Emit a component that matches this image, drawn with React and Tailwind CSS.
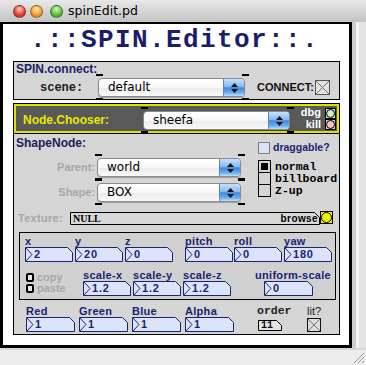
import React from "react";

const SANS = "[font-family:'Liberation_Sans',Arial,sans-serif]";
const MONO = "[font-family:'Liberation_Mono',monospace]";
const DEJA = "[font-family:'DejaVu_Sans',sans-serif]";
const SERIF = "[font-family:'Liberation_Serif',serif]";

// aqua style popup menu, with the little pd inlet/outlet ticks
const Popup = ({ w, text }) => (
    <div className={`relative ${w} h-[19px] shrink-0`}>
        <span className="absolute left-[-2px] top-[-4px] w-[7px] h-[2px] bg-black" />
        <span className="absolute right-[-4px] top-[-4px] w-[7px] h-[2px] bg-black" />
        <span className="absolute left-[-2px] bottom-[-3px] w-[7px] h-[2px] bg-black" />
        <span className="absolute right-[-4px] bottom-[-3px] w-[7px] h-[2px] bg-black" />
        <div className="h-full flex rounded-[4px] border border-[#8a8a8a] bg-[linear-gradient(#ffffff,#f7f7f7_50%,#ebebeb_52%,#f9f9f9)] shadow-[0_1px_1px_rgba(0,0,0,0.25)] overflow-hidden">
            <span className={`flex-1 pl-[9px] text-[12px] leading-[17px] text-black ${DEJA}`}>{text}</span>
            <span className="w-[21px] flex flex-col items-center justify-center gap-[2px] border-l border-[#5f86c0] bg-[linear-gradient(#c6e1fb,#86baf0_45%,#4187dd_52%,#68acef_80%,#b9e2ff)]">
                <svg width="7" height="4"><polygon points="3.5,0 7,4 0,4" fill="#111" /></svg>
                <svg width="7" height="4"><polygon points="0,0 7,0 3.5,4" fill="#111" /></svg>
            </span>
        </div>
    </div>
);

// pd atom box: notched top-right corner, optional ">" for number boxes
const Atom = ({ w, h = 15, v, fill = "#dbe4fb", stroke = "#1b2470", arrow = true, textCls }) => (
    <div className="relative shrink-0">
        <svg width={w} height={h} className="block">
            <polygon
                points={`0.5,0.5 ${w - 5.5},0.5 ${w - 0.5},5.5 ${w - 0.5},${h - 0.5} 0.5,${h - 0.5}`}
                fill={fill}
                stroke={stroke}
            />
            {arrow && <polyline points={`1,1 7,${h / 2} 1,${h - 1}`} fill="none" stroke={stroke} />}
        </svg>
        {v !== undefined && (
            <span className={`absolute top-0 ${arrow ? "left-[9px]" : "left-[3px]"} ${textCls}`}>{v}</span>
        )}
    </div>
);

const Num = ({ label, v, w = 48 }) => (
    <div className="flex flex-col">
        <span className={`text-[11px] leading-[12px] font-bold tracking-[0.3px] text-[#1b2470] ${SANS}`}>{label}</span>
        <Atom w={w} v={v} textCls={`text-[11px] leading-[15px] font-bold tracking-[0.8px] text-[#1b2470] ${SANS}`} />
    </div>
);

const Toggle = ({ s = 15, fill = "#e2e2e2", stroke = "#555" }) => (
    <svg width={s} height={s} className="block shrink-0">
        <rect x="0.5" y="0.5" width={s - 1} height={s - 1} fill={fill} stroke={stroke} />
        <line x1="1" y1="1" x2={s - 1} y2={s - 1} stroke="#777" />
        <line x1={s - 1} y1="1" x2="1" y2={s - 1} stroke="#777" />
    </svg>
);

const Bang = ({ cls }) => (
    <div className={`w-[11px] h-[11px] border border-black ${cls} flex items-center justify-center`}>
        <div className="w-[9px] h-[9px] rounded-full border border-black" />
    </div>
);

const SmallBang = () => (
    <div className="w-[8px] h-[9px] border-2 border-black bg-[#e6e6e6] rounded-[2px] shrink-0" />
);

const Light = ({ c }) => (
    <div className={`w-[13px] h-[13px] rounded-full border border-[rgba(0,0,0,0.35)] ${c}`} />
);

const App = () => {
    return (
        <div className={`w-[366px] h-[365px] flex flex-col bg-[#ebebeb] overflow-hidden ${SANS}`}>
            {/* title bar */}
            <div className="h-[22px] shrink-0 flex items-center bg-linear-to-b from-[#e8e8e8] to-[#c3c3c3]">
                <div className="ml-[13px]">
                    <Light c="bg-[radial-gradient(circle_at_50%_30%,#ffd0c8,#e8463c_55%,#a8241c)]" />
                </div>
                <div className="ml-[4px]">
                    <Light c="bg-[radial-gradient(circle_at_50%_30%,#ffe6b0,#f2a132_55%,#b8701a)]" />
                </div>
                <div className="ml-[7px]">
                    <Light c="bg-[radial-gradient(circle_at_50%_30%,#d8f8c0,#5fc040_55%,#2e8a1e)]" />
                </div>
                <span className={`ml-[5px] text-[12.5px] text-black ${DEJA}`}>spinEdit.pd</span>
            </div>

            <div className="flex h-[326px] shrink-0">
                {/* pd canvas */}
                <div className="w-[352px] h-[326px] shrink-0 bg-white border-black border-t-2 border-x-[3px] border-b-[3px] flex flex-col">
                    <h1 className={`mt-[1px] ml-[27px] text-[26px] leading-[30px] font-bold tracking-[1.4px] text-[#1c1c6c] ${MONO}`}>
                        .::SPIN.Editor::.
                    </h1>

                    {/* SPIN.connect */}
                    <div className="ml-[10px] mt-[6px] w-[327px] h-[39px] border border-black bg-[#d5d5d5] flex flex-col">
                        <span className="h-[14px] pl-[2px] text-[12px] leading-[14px] font-bold text-[#20205f]">SPIN.connect:</span>
                        <div className="flex items-center mt-[2px] h-[19px]">
                            <span className={`w-[84px] pl-[26px] text-[12px] font-bold text-[#222] ${MONO}`}>scene:</span>
                            <Popup w="w-[147px]" text="default" />
                            <span className="ml-[12px] text-[11px] font-bold text-[#111]">CONNECT:</span>
                            <div className="ml-[1px]">
                                <Toggle />
                            </div>
                        </div>
                    </div>

                    {/* Node.Chooser */}
                    <div className="ml-[10px] mt-[3px] w-[327px] h-[31px] border border-black shrink-0">
                        <div className="h-full border-2 border-[#e2e200] bg-[#595959] flex items-start">
                            <span className="w-[127px] pl-[7px] mt-[7px] text-[12px] leading-[14px] font-bold text-[#eaea00]">Node.Chooser:</span>
                            <div className="mt-[5px]">
                                <Popup w="w-[147px]" text="sheefa" />
                            </div>
                            <div className="w-[31px] flex flex-col items-end text-[11px] leading-[12px] font-bold text-white">
                                <span>dbg</span>
                                <span>kill</span>
                            </div>
                            <div className="ml-[4px] mt-[2px] flex flex-col">
                                <Bang cls="bg-[#c8f2c8]" />
                                <Bang cls="bg-[#f6c4c8]" />
                            </div>
                        </div>
                    </div>

                    {/* ShapeNode */}
                    <div className="ml-[10px] w-[327px] h-[201px] shrink-0 border-x border-b border-black bg-[#d5d5d5] flex flex-col">
                        <div className="flex h-[71px]">
                            <div className="w-[244px] flex flex-col">
                                <span className="pl-[2px] mt-[2px] text-[12px] leading-[14px] font-bold text-[#20205f]">ShapeNode:</span>
                                <div className="mt-[8px] flex items-center h-[19px]">
                                    <span className="w-[83px] pr-[2px] text-right text-[11px] font-bold text-[#a6a6a6]">Parent:</span>
                                    <Popup w="w-[144px]" text="world" />
                                </div>
                                <div className="mt-[6px] flex items-center h-[19px]">
                                    <span className="w-[83px] pr-[2px] text-right text-[11px] font-bold text-[#a6a6a6]">Shape:</span>
                                    <Popup w="w-[144px]" text="BOX" />
                                </div>
                            </div>
                            <div className="flex flex-col">
                                <div className="mt-[8px] h-[12px] flex items-center">
                                    <div className="w-[12px] h-[12px] border border-[#7a7a7a] bg-[#d8e2f8]" />
                                    <span className="ml-[3px] text-[10.5px] font-bold text-[#1b2470]">draggable?</span>
                                </div>
                                <div className="mt-[6px] flex flex-col">
                                    {["normal", "billboard", "Z-up"].map((t, i) => (
                                        <div key={t} className={`flex items-center ${i > 0 ? "-mt-[1px]" : ""}`}>
                                            <div className="w-[13px] h-[13px] border border-black flex items-center justify-center">
                                                {i === 0 && <div className="w-[7px] h-[7px] bg-black" />}
                                            </div>
                                            <span className={`ml-[4px] text-[11.5px] leading-[12px] font-bold text-black ${MONO}`}>{t}</span>
                                        </div>
                                    ))}
                                </div>
                            </div>
                        </div>

                        {/* texture */}
                        <div className="mt-[6px] flex items-start h-[14px]">
                            <span className="w-[56px] pl-[4px] mt-[1px] text-[11px] leading-[13px] font-bold tracking-[0.3px] text-[#a6a6a6]">Texture:</span>
                            <div className="relative mt-[1px]">
                                <Atom w={250} h={13} fill="#d8d8d8" stroke="#000" arrow={false} v="NULL" textCls={`text-[10px] leading-[13px] font-bold text-black ${SERIF}`} />
                                <span className="absolute right-[2px] top-0 text-[10px] leading-[14px] font-bold tracking-[0.4px] text-black">browse</span>
                            </div>
                            <div className="w-[13px] h-[13px] border border-black bg-[#f2f200] flex items-center justify-center">
                                <div className="w-[11px] h-[11px] rounded-full border border-black" />
                            </div>
                        </div>

                        {/* transform */}
                        <div className="ml-[5px] mt-[7px] w-[317px] h-[68px] shrink-0 border border-black bg-[#d0d0d0] flex flex-col">
                            <div className="flex mt-[2px] pl-[5px]">
                                <div className="w-[50px]"><Num label="x" v="2" /></div>
                                <div className="w-[50px]"><Num label="y" v="20" /></div>
                                <div className="w-[60px]"><Num label="z" v="0" /></div>
                                <div className="w-[49px]"><Num label="pitch" v="0" /></div>
                                <div className="w-[50px]"><Num label="roll" v="0" /></div>
                                <div><Num label="yaw" v="180" /></div>
                            </div>
                            <div className="flex mt-[7px]">
                                <div className="w-[63px] pl-[6px] pt-[4px] flex flex-col gap-[2px]">
                                    <div className="flex items-center gap-[3px] h-[9px]">
                                        <SmallBang />
                                        <span className="text-[11px] leading-[9px] font-bold text-[#a6a6a6]">copy</span>
                                    </div>
                                    <div className="flex items-center gap-[3px] h-[9px]">
                                        <SmallBang />
                                        <span className="text-[11px] leading-[9px] font-bold text-[#a6a6a6]">paste</span>
                                    </div>
                                </div>
                                <div className="w-[50px]"><Num label="scale-x" v="1.2" /></div>
                                <div className="w-[50px]"><Num label="scale-y" v="1.2" /></div>
                                <div className="w-[72px]"><Num label="scale-z" v="1.2" /></div>
                                <div className="flex flex-col">
                                    <span className="text-[11px] leading-[12px] font-bold tracking-[0.3px] text-[#1b2470]">uniform-scale</span>
                                    <div className="ml-[9px]">
                                        <Atom w={49} v="0" textCls={`text-[11px] leading-[15px] font-bold tracking-[0.8px] text-[#1b2470] ${SANS}`} />
                                    </div>
                                </div>
                            </div>
                        </div>

                        {/* colour */}
                        <div className="flex mt-[5px] pl-[12px]">
                            <div className="w-[53px]"><Num label="Red" v="1" w={49} /></div>
                            <div className="w-[53px]"><Num label="Green" v="1" w={49} /></div>
                            <div className="w-[53px]"><Num label="Blue" v="1" w={49} /></div>
                            <div className="w-[72px]"><Num label="Alpha" v="1" w={49} /></div>
                            <div className="w-[50px] flex flex-col">
                                <span className={`text-[11.5px] leading-[12px] font-bold text-[#222] ${MONO}`}>order</span>
                                <div className="mt-[3px] ml-[1px]">
                                    <Atom w={24} h={11} fill="#e4e4e4" stroke="#000" arrow={false} v="11" textCls={`text-[10px] leading-[11px] font-bold text-[#111] ${MONO}`} />
                                </div>
                            </div>
                            <div className="flex flex-col">
                                <span className="text-[11px] leading-[12px] text-[#222]">lit?</span>
                                <div className="mt-[1px]">
                                    <Toggle s={14} fill="#dcdcdc" stroke="#111" />
                                </div>
                            </div>
                        </div>
                    </div>
                </div>

                {/* right edge */}
                <div className="flex-1 flex">
                    <div className="w-[4px] bg-[#cdcdcd]" />
                    <div className="w-[3px] bg-[#f4f4f4]" />
                    <div className="flex-1 bg-[#e3e3e3]" />
                </div>
            </div>

            {/* bottom edge with resize grip */}
            <div className="flex-1 border-t-2 border-[#d6d6d6] bg-[#ececec] flex justify-end items-end">
                <svg width="12" height="12" className="block mr-[1px] mb-[1px]">
                    <line x1="11" y1="1" x2="1" y2="11" stroke="#9a9a9a" />
                    <line x1="11" y1="5" x2="5" y2="11" stroke="#9a9a9a" />
                    <line x1="11" y1="9" x2="9" y2="11" stroke="#9a9a9a" />
                </svg>
            </div>
        </div>
    );
};

export default App;
